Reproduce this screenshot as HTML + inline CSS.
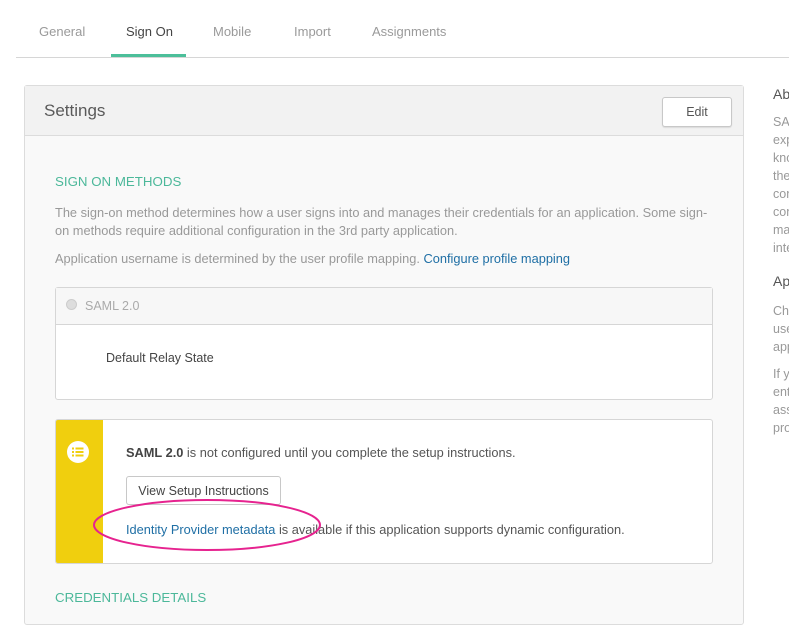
<!DOCTYPE html>
<html><head><style>
*{margin:0;padding:0;box-sizing:border-box}
body{width:789px;height:613px;overflow:hidden;background:#fff;font-family:"Liberation Sans",sans-serif;position:relative;color:#5e5e5e}
.a{position:absolute;white-space:nowrap}
.tab{font-size:13px;color:#9a9a9a;top:24px}
.g{color:#999;font-size:12.8px}
.side{font-size:12.5px;color:#999;left:773px}
</style></head><body>
<div class="a tab" style="left:39px">General</div>
<div class="a tab" style="left:126px;color:#444">Sign On</div>
<div class="a tab" style="left:213px">Mobile</div>
<div class="a tab" style="left:294px">Import</div>
<div class="a tab" style="left:372px">Assignments</div>
<div class="a" style="left:111px;top:54px;width:75px;height:4px;background:#4cbf9a"></div>
<div class="a" style="left:16px;top:57px;width:773px;height:1px;background:#d6d6d6"></div>

<div class="a" style="left:24px;top:85px;width:720px;height:540px;background:#f9f9f9;border:1px solid #dcdcdc;border-radius:3px"></div>
<div class="a" style="left:25px;top:86px;width:718px;height:50px;background:#f2f2f2;border-bottom:1px solid #dcdcdc"></div>
<div class="a" style="left:44px;top:101px;font-size:17px;color:#5a5a5a">Settings</div>
<div class="a" style="left:662px;top:97px;width:70px;height:30px;background:#fff;border:1px solid #c8c8c8;border-radius:3px;font-size:12.5px;color:#555;text-align:center;line-height:28px;box-shadow:0 1px 1px rgba(0,0,0,.1)">Edit</div>

<div class="a" style="left:55px;top:174px;font-size:13.3px;color:#4cb89a">SIGN ON METHODS</div>
<div class="a g" style="left:55px;top:205px">The sign-on method determines how a user signs into and manages their credentials for an application. Some sign-</div>
<div class="a g" style="left:55px;top:223px">on methods require additional configuration in the 3rd party application.</div>
<div class="a g" style="left:55px;top:251px">Application username is determined by the user profile mapping. <span style="color:#1f6fa5">Configure profile mapping</span></div>

<div class="a" style="left:55px;top:287px;width:658px;height:113px;background:#fff;border:1px solid #d6d6d6;border-radius:3px"></div>
<div class="a" style="left:56px;top:288px;width:656px;height:37px;background:#f7f7f7;border-bottom:1px solid #d6d6d6"></div>
<div class="a" style="left:66px;top:299px;width:11px;height:11px;border-radius:50%;background:#ddd;border:1px solid #ccc"></div>
<div class="a" style="left:85px;top:299px;font-size:12.5px;color:#aaa">SAML 2.0</div>
<div class="a" style="left:106px;top:351px;font-size:12.5px;color:#444">Default Relay State</div>

<div class="a" style="left:55px;top:419px;width:658px;height:145px;background:#fff;border:1px solid #d6d6d6;border-radius:3px;overflow:hidden">
<div style="position:absolute;left:0;top:0;width:47px;height:145px;background:#f0cf0e"></div>
</div>
<svg class="a" style="left:67px;top:441px" width="22" height="22" viewBox="0 0 22 22"><circle cx="11" cy="11" r="11" fill="#fff"/><g fill="#f0cf0e"><rect x="5" y="6.5" width="2" height="2"/><rect x="5" y="10" width="2" height="2"/><rect x="5" y="13.5" width="2" height="2"/><rect x="8.5" y="6.5" width="8" height="2"/><rect x="8.5" y="10" width="8" height="2"/><rect x="8.5" y="13.5" width="8" height="2"/></g></svg>
<div class="a" style="left:126px;top:445px;font-size:12.8px;color:#555"><b style="color:#444">SAML 2.0</b> is not configured until you complete the setup instructions.</div>
<div class="a" style="left:126px;top:476px;width:155px;height:29px;background:#fff;border:1px solid #c8c8c8;border-radius:3px;font-size:12.5px;color:#444;text-align:center;line-height:28px">View Setup Instructions</div>
<div class="a" style="left:126px;top:522px;font-size:12.8px;color:#555"><span style="color:#1f6fa5">Identity Provider metadata</span> is available if this application supports dynamic configuration.</div>
<svg class="a" style="left:90px;top:495px" width="235" height="60"><ellipse cx="117" cy="30" rx="113" ry="25" fill="none" stroke="#e6238f" stroke-width="2"/></svg>

<div class="a" style="left:55px;top:590px;font-size:13.3px;color:#4cb89a">CREDENTIALS DETAILS</div>

<div class="a" style="left:773px;top:86px;font-size:14px;color:#555">About</div>
<div class="a side" style="top:113px;line-height:18px">SAML<br>expl<br>know<br>the<br>conf<br>conf<br>man<br>inte</div>
<div class="a" style="left:773px;top:273px;font-size:14px;color:#555">App</div>
<div class="a side" style="top:302px;line-height:18px">Choo<br>user<br>appl</div>
<div class="a side" style="top:365px;line-height:18px">If yo<br>enter<br>assi<br>prov</div>
</body></html>
